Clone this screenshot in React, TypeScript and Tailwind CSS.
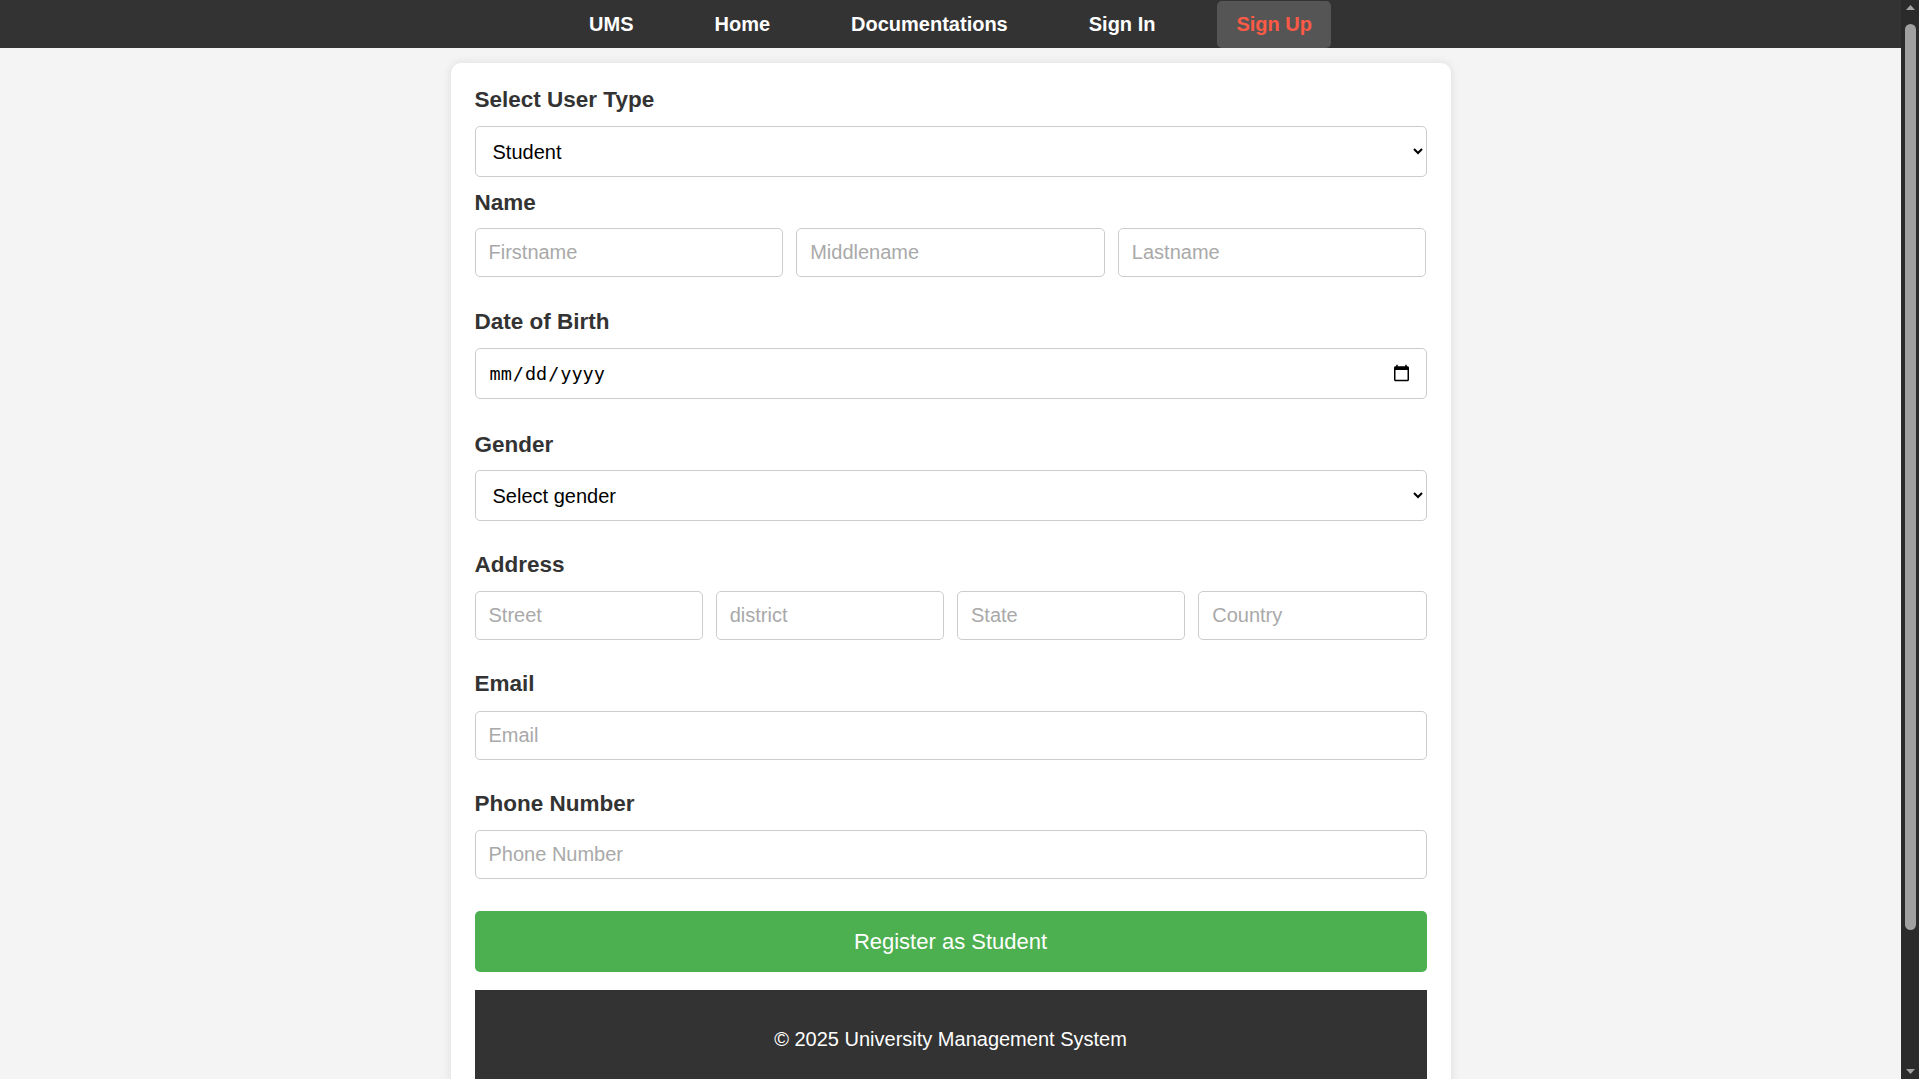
const navLinks = ['UMS', 'Home', 'Documentations', 'Sign In'];

function Label({ children, className = '' }: { children: React.ReactNode; className?: string }) {
  return <label className={`block text-[22.5px] font-bold leading-[25px] text-[#333] ${className}`}>{children}</label>;
}

const inputCls =
  'h-[49px] w-full rounded-[5px] border border-[#ccc] bg-white px-[13px] text-[20px] text-black outline-none placeholder:text-[#a9a9a9]';

const selectCls =
  'h-[51px] w-full rounded-[5px] border border-[#ccc] bg-white px-[13px] text-[20px] text-black outline-none';

function Scrollbar() {
  return (
    <div className="flex w-[18px] shrink-0 flex-col items-center bg-[#2b2b2b]">
      <svg width="9" height="5" viewBox="0 0 9 5" className="mt-[5px]">
        <path d="M4.5 0L9 5H0z" fill="#a3a3a3" />
      </svg>
      <div className="mt-[14px] h-[906px] w-[11px] rounded-full bg-[#a0a0a0]" />
      <div className="flex-1" />
      <svg width="9" height="5" viewBox="0 0 9 5" className="mb-[5px]">
        <path d="M0 0H9L4.5 5z" fill="#a3a3a3" />
      </svg>
    </div>
  );
}

export default function App() {
  return (
    <div className="flex h-screen font-['Liberation_Sans',Arial,sans-serif]">
      <div className="flex-1 overflow-hidden bg-[#f4f4f4]">
        <nav className="flex h-12 items-center justify-center gap-[43px] bg-[#333]">
          {navLinks.map((l) => (
            <a key={l} className="px-[19px] py-3 text-[20px] font-bold leading-[23px] text-white">
              {l}
            </a>
          ))}
          <a className="rounded-[5px] bg-[#555] px-[19px] py-3 text-[20px] font-bold leading-[23px] text-[#ff5a45]">
            Sign Up
          </a>
        </nav>

        <div className="mx-auto mt-[15px] w-[1000px] rounded-[10px] bg-white px-[24px] pb-[24px] pt-[24px] shadow-[0_0_10px_rgba(0,0,0,0.1)]">
          <Label>Select User Type</Label>
          <select className={`mt-[14px] ${selectCls}`} defaultValue="student">
            <option value="student">Student</option>
            <option value="teacher">Teacher</option>
            <option value="admin">Admin</option>
          </select>

          <Label className="mt-[13px]">Name</Label>
          <div className="mt-[13px] grid grid-cols-3 gap-[13px]">
            <input className={inputCls} placeholder="Firstname" />
            <input className={inputCls} placeholder="Middlename" />
            <input className={inputCls} placeholder="Lastname" />
          </div>

          <Label className="mt-[32px]">Date of Birth</Label>
          <input
            type="date"
            className="mt-[14px] h-[51px] w-full rounded-[5px] border border-[#ccc] bg-white px-[13px] font-['DejaVu_Sans_Mono',monospace] text-[18.5px] text-black outline-none"
          />

          <Label className="mt-[33px]">Gender</Label>
          <select className={`mt-[13px] ${selectCls}`} defaultValue="">
            <option value="">Select gender</option>
            <option value="male">Male</option>
            <option value="female">Female</option>
          </select>

          <Label className="mt-[31px]">Address</Label>
          <div className="mt-[14px] grid grid-cols-4 gap-[13px]">
            <input className={inputCls} placeholder="Street" />
            <input className={inputCls} placeholder="district" />
            <input className={inputCls} placeholder="State" />
            <input className={inputCls} placeholder="Country" />
          </div>

          <Label className="mt-[31px]">Email</Label>
          <input className={`mt-[15px] ${inputCls}`} placeholder="Email" />

          <Label className="mt-[31px]">Phone Number</Label>
          <input className={`mt-[14px] ${inputCls}`} placeholder="Phone Number" />

          <button className="mt-[32px] h-[61px] w-full rounded-[5px] bg-[#4caf50] text-[22px] text-white">
            Register as Student
          </button>

          <footer className="mt-[18px] bg-[#333] py-[38px] text-center text-[20px] leading-[23px] text-white">
            © 2025 University Management System
          </footer>
        </div>
      </div>
      <Scrollbar />
    </div>
  );
}
